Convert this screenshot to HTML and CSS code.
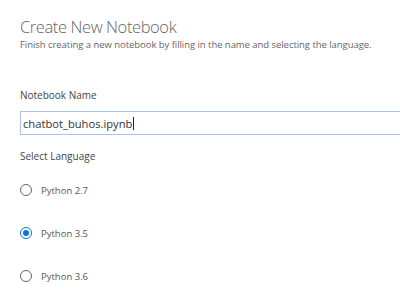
FILE: index.html
```html
<!DOCTYPE html>
<html lang="en">
<head>
    <meta charset="UTF-8">
    <meta name="viewport" content="width=device-width, initial-scale=1.0">
    <title>Create New Notebook</title>
    <link rel="stylesheet" href="styles.css">
</head>
<body>
    <div class="panel">
        <h1>Create New Notebook</h1>
        <p class="subtitle">Finish creating a new notebook by filling in the name and selecting the language.</p>

        <label class="field-label" for="nb-name">Notebook Name</label>
        <div class="name-box">
            <span class="name-text">chatbot_buhos.ipynb</span><span class="caret"></span>
        </div>

        <div class="field-label">Select Language</div>
        <div class="languages">
            <div class="radio-row">
                <span class="radio"></span>
                <span class="radio-label">Python 2.7</span>
            </div>
            <div class="radio-row">
                <span class="radio checked"></span>
                <span class="radio-label">Python 3.5</span>
            </div>
            <div class="radio-row">
                <span class="radio"></span>
                <span class="radio-label">Python 3.6</span>
            </div>
        </div>
    </div>
</body>
</html>
```

FILE: styles.css
```css
body {
    margin: 0;
    padding: 0;
    background: #fff;
    font-family: "Open Sans", "Noto Sans", sans-serif;
    color: #444;
    overflow: hidden;
}
.panel {
    padding: 16px 0 0 20px;
}
h1 {
    margin: 0;
    font-size: 16.5px;
    font-weight: 300;
    letter-spacing: -0.4px;
    color: #666;
    line-height: 22px;
}
.subtitle {
    margin: 0;
    font-size: 9.5px;
    letter-spacing: -0.05px;
    color: #666;
    line-height: 14px;
}
.field-label {
    display: block;
    margin-top: 36px;
    font-size: 10px;
    color: #444;
    line-height: 14px;
}
.name-box {
    margin-top: 9px;
    height: 22px;
    border: 1px solid #a9c3ee;
    border-right: none;
    display: flex;
    align-items: center;
    padding-left: 2px;
}
.name-text {
    font-size: 11.2px;
    color: #333;
}
.caret {
    width: 1px;
    height: 13px;
    background: #222;
    margin-left: 1px;
}
.name-box + .field-label {
    margin-top: 14px;
}
.languages {
    display: flex;
    flex-direction: column;
    gap: 31px;
    margin-top: 21px;
}
.radio-row {
    display: flex;
    align-items: center;
    height: 12px;
}
.radio {
    width: 10px;
    height: 10px;
    border: 1px solid #666;
    border-radius: 50%;
    box-sizing: content-box;
    position: relative;
}
.radio.checked {
    border-color: #0078d7;
}
.radio.checked::after {
    content: "";
    position: absolute;
    left: 2px;
    top: 2px;
    width: 6px;
    height: 6px;
    border-radius: 50%;
    background: #0078d7;
}
.radio-label {
    margin-left: 9px;
    font-size: 9.5px;
    color: #555;
}
```
